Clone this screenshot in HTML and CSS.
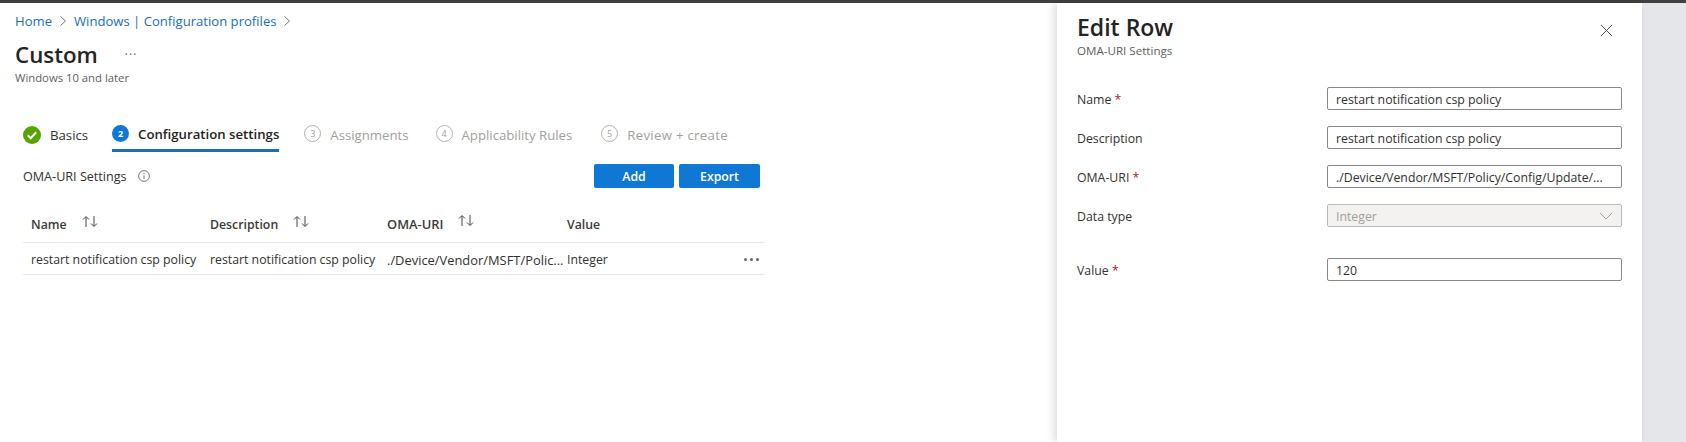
FILE: index.html
```html
<!DOCTYPE html>
<html lang="en">
<head>
<meta charset="utf-8">
<title>Custom</title>
<link rel="stylesheet" href="styles.css">
</head>
<body>
<div class="topbar"></div>
<div class="shell">
  <main class="main">
    <nav class="crumbs">
      <a>Home</a>
      <svg class="chev" viewBox="0 0 8 12"><path d="M1.500 1.500 6.500 6l-5 4.500"/></svg>
      <a>Windows | Configuration profiles</a>
      <svg class="chev" viewBox="0 0 8 12"><path d="M1.500 1.500 6.500 6l-5 4.500"/></svg>
    </nav>
    <div class="title-row"><h1>Custom</h1><span class="title-more">···</span></div>
    <div class="subtitle">Windows 10 and later</div>
    <div class="steps">
      <div class="step done">
        <svg class="badge" viewBox="0 0 18 18"><circle cx="9" cy="9" r="9" fill="#57a300"/><path d="M4.800 9.300 7.700 12.200 13.200 6.200" fill="none" stroke="#fff" stroke-width="2"/></svg>
        <span>Basics</span>
      </div>
      <div class="step active"><span class="num">2</span><span>Configuration settings</span></div>
      <div class="step off s3"><span class="num">3</span><span>Assignments</span></div>
      <div class="step off s4"><span class="num">4</span><span>Applicability Rules</span></div>
      <div class="step off s5"><span class="num">5</span><span>Review + create</span></div>
    </div>
    <div class="toolbar">
      <div class="tool-label">OMA-URI Settings
        <svg class="info" viewBox="0 0 12 12"><circle cx="6" cy="6" r="5.400"/><path d="M6 5.200v3.600M6 3v1.200"/></svg>
      </div>
      <div class="buttons"><button class="btn">Add</button><button class="btn">Export</button></div>
    </div>
    <div class="table">
      <div class="tr head">
        <div class="c1">Name<svg class="sort" viewBox="0 0 18 13"><path d="M4 12V2M1 4.500 4 1.500l3 3M12 1v10M9 8.500l3 3 3-3"/></svg></div>
        <div class="c2">Description<svg class="sort" viewBox="0 0 18 13"><path d="M4 12V2M1 4.500 4 1.500l3 3M12 1v10M9 8.500l3 3 3-3"/></svg></div>
        <div class="c3">OMA-URI<svg class="sort" viewBox="0 0 18 13"><path d="M4 12V2M1 4.500 4 1.500l3 3M12 1v10M9 8.500l3 3 3-3"/></svg></div>
        <div class="c4">Value</div>
      </div>
      <div class="tr body">
        <div class="c1">restart notification csp policy</div>
        <div class="c2">restart notification csp policy</div>
        <div class="c3">./Device/Vendor/MSFT/Polic...</div>
        <div class="c4">Integer</div>
        <div class="more"><i></i><i></i><i></i></div>
      </div>
    </div>
  </main>
  <aside class="panel">
    <div class="panel-head">
      <div>
        <h2>Edit Row</h2>
        <div class="panel-sub">OMA-URI Settings</div>
      </div>
      <svg class="close" viewBox="0 0 14 14"><path d="M1 1 13 13M13 1 1 13"/></svg>
    </div>
    <div class="form">
      <div class="row"><label>Name <b>*</b></label><div class="input">restart notification csp policy</div></div>
      <div class="row"><label>Description</label><div class="input">restart notification csp policy</div></div>
      <div class="row"><label>OMA-URI <b>*</b></label><div class="input">./Device/Vendor/MSFT/Policy/Config/Update/...</div></div>
      <div class="row"><label>Data type</label><div class="input disabled">Integer<svg class="drop" viewBox="0 0 14 8"><path d="M1 1 7 7l6-6"/></svg></div></div>
      <div class="row gap"><label>Value <b>*</b></label><div class="input">120</div></div>
    </div>
  </aside>
  <div class="strip"></div>
</div>
</body>
</html>
```
FILE: styles.css
```css
* { box-sizing: border-box; }
html, body { margin: 0; height: 100%; overflow: hidden; }
body {
  font-family: "Open Sans", "Noto Sans", "Liberation Sans", sans-serif;
  font-size: 12.300px;
  color: #323130;
  background: #fff;
}
.topbar { height: 3px; background: #404040; }
.shell { display: flex; height: 439px; }
.main { flex: 1; min-width: 0; padding: 9px 0 0 15px; }
.crumbs { display: flex; align-items: center; height: 18px; color: #1a6fb5; font-size: 13.100px; white-space: nowrap; }
.chev { width: 8px; height: 12px; margin: 0 7px; fill: none; stroke: #777; stroke-width: 1; }
.title-row { display: flex; align-items: center; height: 32px; margin-top: 8px; }
h1 { margin: 0; font-size: 22.300px; font-weight: 600; color: #252423; }
.title-more { margin-left: 27px; font-size: 12px; letter-spacing: 1px; color: #666; }
.subtitle { font-size: 11.300px; color: #605e5c; margin-top: 1px; line-height: 14px; }
.steps { display: flex; height: 38px; margin-top: 29px; padding-left: 8px; font-size: 13.200px; white-space: nowrap; }
.step { display: flex; align-items: center; gap: 9px; height: 38px; padding-top: 3px; flex: none; }
.badge { width: 18px; height: 18px; }
.done { margin-right: 24px; }
.num { width: 17px; height: 17px; border-radius: 50%; display: flex; align-items: center; justify-content: center; font-size: 9px; font-weight: 700; }
.active { border-bottom: 3px solid #1f6fb0; font-weight: 600; color: #252423; padding-top: 4px; }
.active .num { background: #0f78d4; color: #fff; }
.off { color: #a19f9d; }
.off .num { border: 1px solid #b5b3b1; color: #a19f9d; font-weight: 400; margin-top: -2px; }
.s3 { margin-left: 25px; }
.s4 { margin-left: 27px; }
.s5 { margin-left: 29px; letter-spacing: .3px; }
.toolbar { display: flex; justify-content: space-between; align-items: center; width: 745px; height: 24px; margin-top: 12px; padding-left: 8px; }
.tool-label { display: flex; align-items: center; gap: 11px; font-size: 12.600px; }
.info { width: 12px; height: 12px; fill: none; stroke: #777; stroke-width: 1; }
.buttons { display: flex; gap: 5px; }
.btn { width: 80px; height: 24px; border: 0; border-radius: 2px; background: #0f78d4; color: #fff; font: 600 12.300px "Open Sans", "Noto Sans", sans-serif; padding: 0; }
.btn:last-child { width: 81px; }
.table { width: 742px; margin: 22px 0 0 8px; }
.tr { display: flex; align-items: center; position: relative; height: 32px; border-bottom: 1px solid #e8e8e8; }
.head { height: 33px; font-weight: 600; color: #3b3a39; padding-bottom: 4px; }
.body { padding-top: 2px; }
.c1, .c2, .c3, .c4 { padding-left: 8px; white-space: nowrap; display: flex; flex: none; }
.c1 { width: 179px; }
.c2 { width: 178px; }
.c3 { width: 179px; font-size: 12.900px; padding-left: 7px; }
.c4 { width: 100px; }
.sort { width: 18px; height: 13px; margin: -1px 0 0 15px; fill: none; stroke: #444; stroke-width: 1; }
.more { position: absolute; right: 6px; top: 15px; display: flex; gap: 3px; }
.more i { width: 3px; height: 3px; border-radius: 50%; background: #666; }
.panel { width: 585px; flex: none; padding: 0 20px; background: #fff; box-shadow: -3px 0 8px rgba(0, 0, 0, .14); position: relative; }
.panel-head { display: flex; justify-content: space-between; height: 84px; padding-top: 7px; }
h2 { margin: 0; font-size: 23px; font-weight: 600; color: #252423; line-height: 34px; }
.panel-sub { font-size: 11.600px; color: #605e5c; line-height: 14px; }
.close { width: 13px; height: 13px; margin: 14px 9px 0 0; fill: none; stroke: #444; stroke-width: 1; }
.row { display: flex; justify-content: space-between; align-items: center; height: 23px; margin-bottom: 16px; }
.row.gap { margin-top: 31px; }
label { padding-top: 1px; }
label b { color: #a4262c; font-weight: 400; }
.input { width: 295px; height: 23px; border: 1px solid #8a8886; border-radius: 2px; padding: 1px 0 0 8px; display: flex; align-items: center; justify-content: space-between; white-space: nowrap; }
.disabled { background: #f3f2f1; border-color: #bdbbb9; color: #a19f9d; }
.drop { width: 14px; height: 8px; margin-right: 8px; fill: none; stroke: #a19f9d; stroke-width: 1; }
.strip { flex: none; width: 44px; background: #e5e6ea; }
```
